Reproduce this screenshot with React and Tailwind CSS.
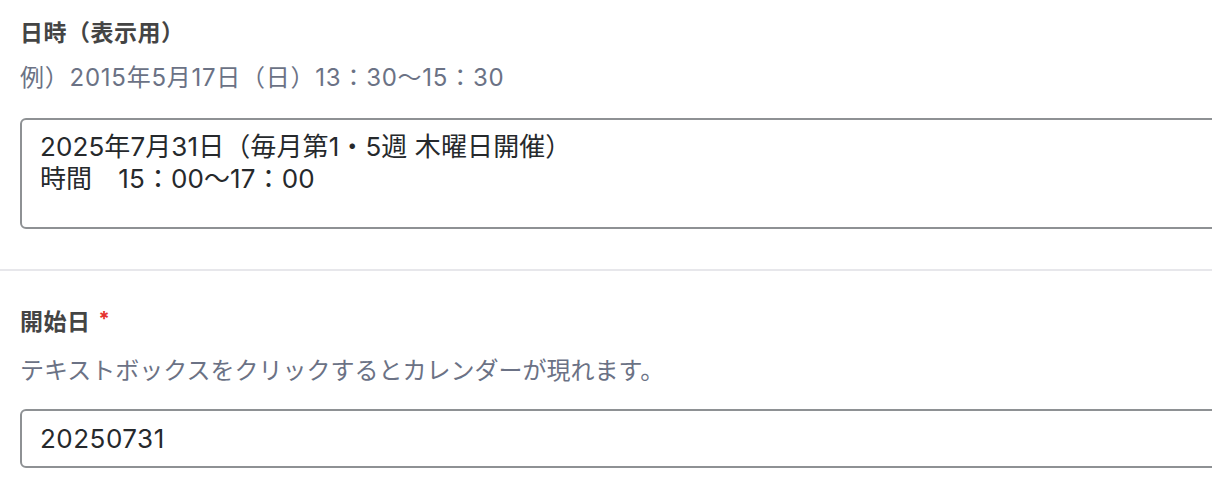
import React from 'react';

const font = { fontFamily: '"Inter", "Noto Sans CJK JP", "Noto Sans", sans-serif' };

const Label = ({ children, required }) => (
    <div className="h-8 flex items-center text-[23px] font-semibold text-[#444] leading-8 tracking-[0.5px]">
        {children}
        {required && <span className="ml-[8px] -mt-[6px] text-[#e5322d] text-[20px] font-bold leading-none">*</span>}
    </div>
);

const Hint = ({ children, className = '' }) => (
    <div className={`h-8 text-[24px] leading-8 text-[#6b7285] ${className}`}>{children}</div>
);

export default function App() {
    return (
        <div className="w-full h-[488px] overflow-hidden bg-white" style={font}>
            <div className="w-[1260px]">
                {/* 日時 */}
                <div className="pl-5 pt-[17px] pb-[40px] flex flex-col">
                    <Label>日時（表示用）</Label>
                    <Hint className="mt-[13px] tracking-[0.75px]">例）2015年5月17日（日）13：30〜15：30</Hint>
                    <div className="mt-[24px] h-[111px] border-2 border-[#8e9194] rounded-md px-[18px] pt-[11px] text-[26px] leading-8 tracking-[0.1px] text-[#26292c]">
                        <div>2025年7月31日（毎月第1・5週 木曜日開催）</div>
                        <div>時間　15：00〜17：00</div>
                    </div>
                </div>

                <div className="h-[2px] bg-[#e7e7eb]" />

                {/* 開始日 */}
                <div className="pl-5 pt-[35px] flex flex-col">
                    <Label required>開始日</Label>
                    <Hint className="mt-[17px]">テキストボックスをクリックするとカレンダーが現れます。</Hint>
                    <div className="mt-[22px] h-[59px] border-2 border-[#8e9194] rounded-md px-[18px] flex items-center text-[26px] tracking-[0.5px] text-[#26292c]">
                        20250731
                    </div>
                </div>
            </div>
        </div>
    );
}
